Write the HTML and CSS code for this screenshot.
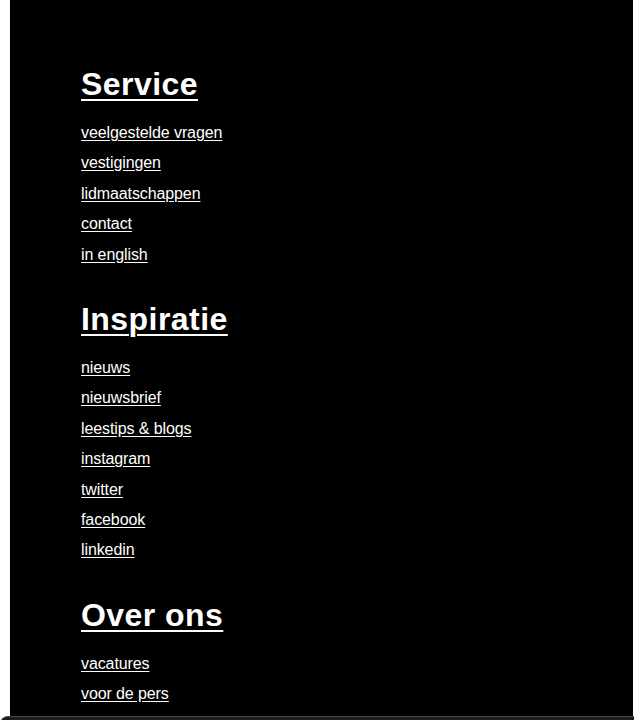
FILE: index.html
```html
<!DOCTYPE html>
<html lang="nl">
<head>
<meta charset="utf-8">
<title>Footer</title>
<link rel="stylesheet" href="styles.css">
</head>
<body>
<div class="page">
  <footer class="footer">
    <section class="group">
      <h2 class="group-title"><a href="#">Service</a></h2>
      <ul class="links">
        <li><a href="#">veelgestelde vragen</a></li>
        <li><a href="#">vestigingen</a></li>
        <li><a href="#">lidmaatschappen</a></li>
        <li><a href="#">contact</a></li>
        <li><a href="#">in english</a></li>
      </ul>
    </section>
    <section class="group">
      <h2 class="group-title"><a href="#">Inspiratie</a></h2>
      <ul class="links">
        <li><a href="#">nieuws</a></li>
        <li><a href="#">nieuwsbrief</a></li>
        <li><a href="#">leestips &amp; blogs</a></li>
        <li><a href="#">instagram</a></li>
        <li><a href="#">twitter</a></li>
        <li><a href="#">facebook</a></li>
        <li><a href="#">linkedin</a></li>
      </ul>
    </section>
    <section class="group">
      <h2 class="group-title"><a href="#">Over ons</a></h2>
      <ul class="links">
        <li><a href="#">vacatures</a></li>
        <li><a href="#">voor de pers</a></li>
      </ul>
    </section>
  </footer>
  <div class="legal">
    <span>privacy, cookies</span>
    <span>disclaimer</span>
    <span>ANBI</span>
    <span>KvK</span>
    <span>RSIN</span>
    <span>© Bibliotheek</span>
  </div>
</div>
</body>
</html>
```

FILE: styles.css
```css
html, body {
  margin: 0;
  padding: 0;
  background: #ffffff;
}

body {
  font-family: "Liberation Sans", Arial, sans-serif;
  overflow: hidden;
}

.page {
  display: flex;
  flex-direction: column;
}

.footer {
  margin-left: 10px;
  width: 623px;
  height: 716px;
  box-sizing: border-box;
  background: #000000;
  padding: 66px 0 0 71px;
  overflow: hidden;
}

.group-title {
  margin: 0 0 15px;
  font-size: 32px;
  line-height: 37px;
  font-weight: bold;
  letter-spacing: 0.45px;
}

.group-title a {
  color: #ffffff;
  text-decoration: underline;
  text-decoration-thickness: 2px;
  text-underline-offset: 4px;
}

.links {
  list-style: none;
  margin: 0 0 31px;
  padding: 0;
}

.links li {
  font-size: 16px;
  line-height: 1.9;
}

.links a {
  color: #ffffff;
  text-decoration: underline;
  text-underline-offset: 2px;
  letter-spacing: -0.1px;
}

.legal {
  width: 634px;
  height: 40px;
  box-sizing: border-box;
  background: #1b1b1b;
  border-top: 1px solid #4a4a4a;
  border-top-left-radius: 8px;
  padding: 2px 0 0 265px;
  display: flex;
  gap: 28px;
  color: #9a9a9a;
  font-size: 15px;
  line-height: 18px;
  white-space: nowrap;
  overflow: hidden;
}
```
